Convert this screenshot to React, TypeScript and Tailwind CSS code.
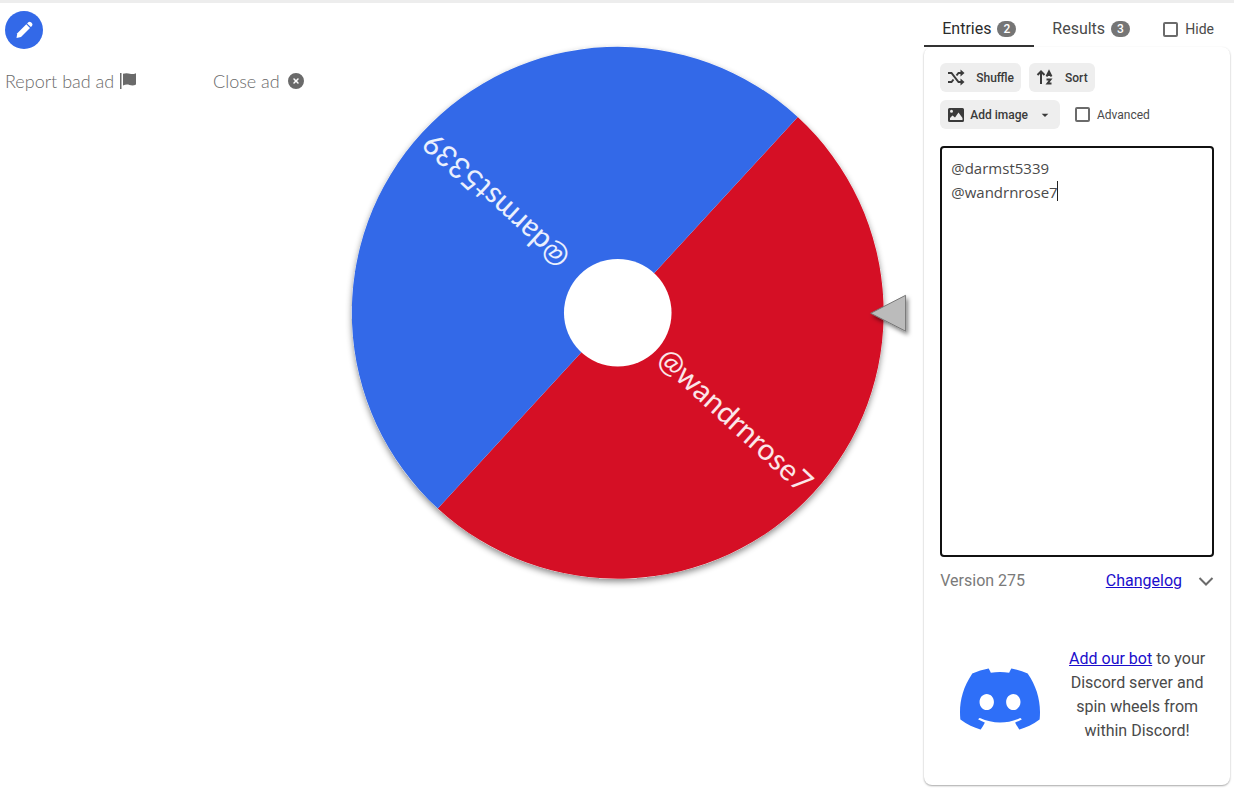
import { useState } from 'react'
import { FaCircleXmark } from 'react-icons/fa6'
import { SiDiscord } from 'react-icons/si'
import { MdArrowDropDown } from 'react-icons/md'

interface Slice {
  label: string
  color: string
}

const SLICES: Slice[] = [
  { label: '@wandrnrose7', color: '#d50f25' },
  { label: '@darmst5339', color: '#3369e8' },
]

// Wheel geometry, in viewBox units
const CENTER = 310
const RADIUS = 267
const HUB = 54
const START_ANGLE = -47.4

function point(angle: number) {
  const rad = (angle * Math.PI) / 180
  return `${CENTER + RADIUS * Math.cos(rad)} ${CENTER + RADIUS * Math.sin(rad)}`
}

function Wheel() {
  const step = 360 / SLICES.length
  return (
    <svg viewBox="0 0 618 618" className="w-full" role="img" aria-label="Wheel">
      <defs>
        <filter id="wheelShadow" x="-10%" y="-10%" width="120%" height="120%">
          <feDropShadow dx="0" dy="3" stdDeviation="3" floodColor="#000" floodOpacity="0.45" />
        </filter>
        <filter id="pointerShadow" x="-30%" y="-30%" width="160%" height="160%">
          <feDropShadow dx="2" dy="3" stdDeviation="2" floodColor="#000" floodOpacity="0.5" />
        </filter>
      </defs>
      <circle cx={CENTER} cy={CENTER} r={RADIUS} fill="#fff" filter="url(#wheelShadow)" />
      {SLICES.map((slice, i) => {
        const from = START_ANGLE + i * step
        return (
          <path
            key={slice.label}
            d={`M${CENTER} ${CENTER}L${point(from)}A${RADIUS} ${RADIUS} 0 0 1 ${point(from + step)}Z`}
            fill={slice.color}
          />
        )
      })}
      {SLICES.map((slice, i) => (
        <text
          key={slice.label}
          x={CENTER + 259}
          y={CENTER}
          dy="10"
          textAnchor="end"
          transform={`rotate(${START_ANGLE + (i + 0.5) * step} ${CENTER} ${CENTER})`}
          className="fill-white/90 font-['Lato',sans-serif] text-[30px]"
        >
          {slice.label}
        </text>
      ))}
      <circle cx={CENTER} cy={CENTER} r={HUB} fill="#fff" />
      <path d="M564 310.500L599 292.500V328.500Z" fill="#bbb" stroke="#777" strokeWidth="1" filter="url(#pointerShadow)" />
    </svg>
  )
}

function PencilIcon() {
  return (
    <svg viewBox="0 0 24 24" className="size-6" fill="currentColor">
      <path d="M4.500 20L5.300 15.200L14.300 6.200L18 9.900L9 18.900Z" />
      <path d="M15.100 5.400L16.300 4.200Q17.700 3.200 19 4.300L20 5.300Q21 6.600 20 7.900L18.800 9.100Z" />
    </svg>
  )
}

function FlagIcon() {
  return (
    <svg viewBox="0 0 16 16" className="size-4" fill="currentColor">
      <path d="M0 0H1.500V16H0ZM3 .8C6-.2 8 .2 10 .8C12 1.400 14 1 16 .2V11.500C14 12.600 12 12.800 9.500 12C7.500 11.400 5.500 11.400 3 12.500Z" />
    </svg>
  )
}

function ShuffleIcon() {
  return (
    <svg viewBox="0 0 20 20" className="size-5" fill="none" stroke="currentColor" strokeWidth="2">
      <path d="M1 5H4.500L11.500 14H15M1 14H4.500L6.500 11.500M9.500 7.500L11.500 5H15" />
      <path d="M13.500 1.500L17.500 5L13.500 8.500ZM13.500 10.500L17.500 14L13.500 17.500Z" fill="currentColor" stroke="none" />
    </svg>
  )
}

function SortIcon() {
  return (
    <svg viewBox="0 0 20 20" className="size-5" fill="none" stroke="currentColor" strokeWidth="2">
      <path d="M5 16V3.500M1.500 7L5 3.500L8.500 7" />
      <path d="M10.500 8.500L13 3.500L15.500 8.500M11.500 7H14.500M10.500 11.500H14.500L11.500 15.500H15.500" />
    </svg>
  )
}

function ImageIcon() {
  return (
    <svg viewBox="0 0 20 20" className="size-5" fill="currentColor">
      <path
        fillRule="evenodd"
        d="M2.500 3H15.500Q17 3 17 4.500V15.500Q17 17 15.500 17H2.500Q1 17 1 15.500V4.500Q1 3 2.500 3ZM3 15H15.500V13L11.500 7.500L8 12.500L5.500 10.500L3 13ZM4.500 4.800A1.500 1.500 0 1 0 4.500 7.800A1.500 1.500 0 1 0 4.500 4.800Z"
      />
    </svg>
  )
}

interface CheckProps {
  label: string
  checked: boolean
  onChange: (value: boolean) => void
  className: string
}

function Check({ label, checked, onChange, className }: CheckProps) {
  return (
    <label className={`flex items-center gap-[7px] text-[#4a4a4a] ${className}`}>
      <input
        type="checkbox"
        checked={checked}
        onChange={(e) => onChange(e.target.checked)}
        className="size-[15px] appearance-none rounded-[2px] border-2 border-[#6b6b6b] checked:bg-[#6b6b6b]"
      />
      {label}
    </label>
  )
}

function Count({ value }: { value: number }) {
  return (
    <span className="rounded-full bg-[#757575] px-1.5 text-xs leading-4 font-medium text-white">{value}</span>
  )
}

export default function App() {
  const [entries, setEntries] = useState('@darmst5339\n@wandrnrose7')
  const [tab, setTab] = useState<'entries' | 'results'>('entries')
  const [hidden, setHidden] = useState(false)
  const [advanced, setAdvanced] = useState(false)

  const toolButton = 'flex h-[29px] items-center rounded-md bg-[#eee] px-[7px] text-xs font-medium text-[#3a3a3a]'
  const tabButton = 'flex h-9 items-center gap-1.5 border-b-2 px-[18px] pt-0.5'

  return (
    <div className="min-h-screen border-t-3 border-[#ededed] bg-white font-['Roboto',sans-serif]">
      <div className="grid grid-cols-[309fr_616fr_310fr]">
        {/* Left: edit button and ad controls */}
        <div className="px-[5px] pt-2">
          <button aria-label="Customize" className="flex size-[38px] items-center justify-center rounded-full bg-[#3369e8] text-white">
            <PencilIcon />
          </button>
          <div className="mt-5 flex items-center justify-between font-['Lato',sans-serif] text-[18px] leading-6 font-light text-[#6a6a6a]">
            <button className="flex items-center gap-1.5">
              Report bad ad <FlagIcon />
            </button>
            <button className="flex items-center gap-2">
              Close ad <FaCircleXmark className="size-4" />
            </button>
          </div>
        </div>

        <main className="pt-px">
          <Wheel />
        </main>

        {/* Right: entries panel */}
        <aside className="pt-2 pr-1">
          <div className="flex items-center text-base">
            <div role="tablist" className="flex">
              <button
                role="tab"
                aria-selected={tab === 'entries'}
                onClick={() => setTab('entries')}
                className={`${tabButton} border-[#333] text-[#2b2b2b]`}
              >
                Entries <Count value={2} />
              </button>
              <button
                role="tab"
                aria-selected={tab === 'results'}
                onClick={() => setTab('results')}
                className={`${tabButton} border-transparent text-[#4a4a4a]`}
              >
                Results <Count value={3} />
              </button>
            </div>
            <Check label="Hide" checked={hidden} onChange={setHidden} className="ml-auto pr-4 text-sm" />
          </div>

          <section className="rounded-lg px-4 pt-4 pb-[42px] shadow-[0_1px_2px_rgba(0,0,0,0.35)]">
            <div className="flex gap-2">
              <button className={`${toolButton} gap-[9px]`}>
                <ShuffleIcon /> Shuffle
              </button>
              <button className={`${toolButton} gap-[9px]`}>
                <SortIcon /> Sort
              </button>
            </div>
            <div className="mt-2 flex items-center gap-[15px]">
              <button className={`${toolButton} gap-[3px]`}>
                <ImageIcon /> Add image <MdArrowDropDown className="ml-1.5 size-4" />
              </button>
              <Check label="Advanced" checked={advanced} onChange={setAdvanced} className="text-xs" />
            </div>
            <div className="relative mt-[17px]">
              <textarea
                aria-label="Entries"
                value={entries}
                onChange={(e) => setEntries(e.target.value)}
                spellCheck={false}
                className="block h-[411px] w-full resize-none rounded-[4px] border-2 border-[#111] px-[9px] py-2 font-['Open_Sans',sans-serif] text-[15px] leading-6 text-[#4a4a4a] caret-transparent outline-none"
              />
              {/* Caret after the last entry */}
              <span className="pointer-events-none absolute top-[35px] left-[117px] h-5 w-px bg-[#222]" />
            </div>
            <div className="mt-3 flex items-center text-base text-[#7a7a7a]">
              <span>Version 275</span>
              <a href="#changelog" className="mr-4 ml-auto text-[#1a0dcc] underline">
                Changelog
              </a>
              <button aria-label="Expand">
                <svg viewBox="0 0 16 16" className="size-4" fill="none" stroke="#6b6b6b" strokeWidth="2">
                  <path d="M1.500 5L8 11.500L14.500 5" />
                </svg>
              </button>
            </div>
            <div className="mt-[54px] flex items-center gap-5 pl-5">
              <SiDiscord className="mt-2 size-20 shrink-0 text-[#2e6ff8]" />
              <p className="flex-1 text-center text-base text-[#4a4a4a]">
                <a href="#bot" className="text-[#1a0dcc] underline">
                  Add our bot
                </a>{' '}
                to your Discord server and spin wheels from within Discord!
              </p>
            </div>
          </section>
        </aside>
      </div>
    </div>
  )
}
